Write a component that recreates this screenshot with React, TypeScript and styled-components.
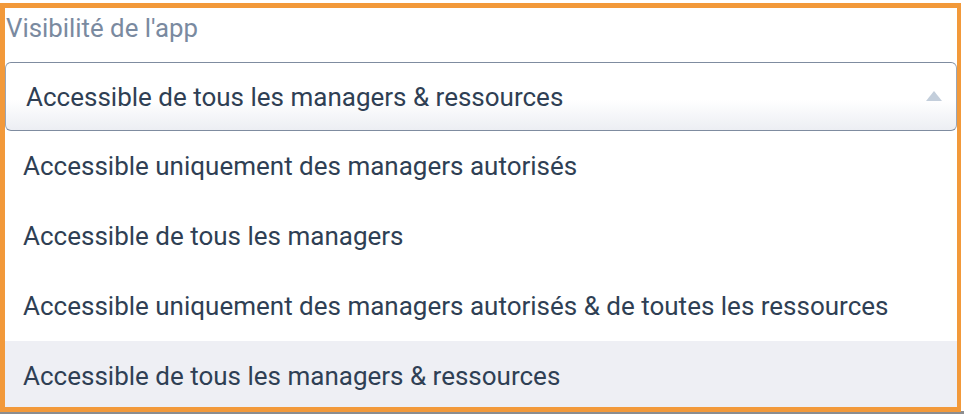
import React from "react";
import styled, { createGlobalStyle } from "styled-components";

const Global = createGlobalStyle`
  html, body { margin: 0; padding: 0; background: #ffffff; }
  body { font-family: Roboto, "Noto Sans", sans-serif; width: 964px; height: 414px; overflow: hidden; }
`;

const Page = styled.div`
  width: 964px;
  height: 414px;
  padding-top: 3px;
  box-sizing: border-box;
  background: linear-gradient(to bottom, #ffffff 0, #ffffff 411px, #8b8d90 411px);
`;

const Frame = styled.div`
  width: 961px;
  height: 409px;
  box-sizing: border-box;
  border: 5px solid #f2993a;
  border-right-width: 4px;
  overflow: hidden;
  background: #ffffff;
  display: flex;
  flex-direction: column;
`;

const Label = styled.div`
  font-size: 25.8px;
  color: #7a8aa0;
  line-height: 30px;
  padding: 5px 0 0 1px;
  height: 54px;
  box-sizing: border-box;
  flex-shrink: 0;
`;

const SelectBox = styled.div`
  height: 69px;
  box-sizing: border-box;
  border: 1px solid #7f8ca0;
  border-left-color: #9aa5b5;
  border-right-color: #9aa5b5;
  border-radius: 6px;
  background: linear-gradient(to bottom, #ffffff 0%, #ffffff 55%, #eceef3 100%);
  display: flex;
  align-items: center;
  justify-content: space-between;
  padding: 0 14px 0 20px;
  flex-shrink: 0;
`;

const SelectedText = styled.span`
  font-size: 26px;
  line-height: 30px;
  color: #2f3f54;
`;

const Caret = styled.span`
  width: 0;
  height: 0;
  border-left: 8px solid transparent;
  border-right: 8px solid transparent;
  border-bottom: 10px solid #c3cedb;
  margin-bottom: 2px;
`;

const List = styled.ul`
  list-style: none;
  margin: 0;
  padding: 0;
  flex-shrink: 0;
`;

const Option = styled.li<{ $active?: boolean }>`
  height: 70px;
  display: flex;
  align-items: center;
  padding-left: 18px;
  font-size: 26px;
  line-height: 30px;
  color: #2f3f54;
  background: ${(p) => (p.$active ? "#eeeff4" : "#ffffff")};
`;

const options = [
  "Accessible uniquement des managers autorisés",
  "Accessible de tous les managers",
  "Accessible uniquement des managers autorisés & de toutes les ressources",
  "Accessible de tous les managers & ressources",
];

export default function App() {
  return (
    <Page>
      <Global />
      <Frame>
        <Label>Visibilité de l'app</Label>
        <SelectBox>
          <SelectedText>Accessible de tous les managers &amp; ressources</SelectedText>
          <Caret />
        </SelectBox>
        <List>
          {options.map((o, i) => (
            <Option key={o} $active={i === 3}>
              {o}
            </Option>
          ))}
        </List>
      </Frame>
    </Page>
  );
}
